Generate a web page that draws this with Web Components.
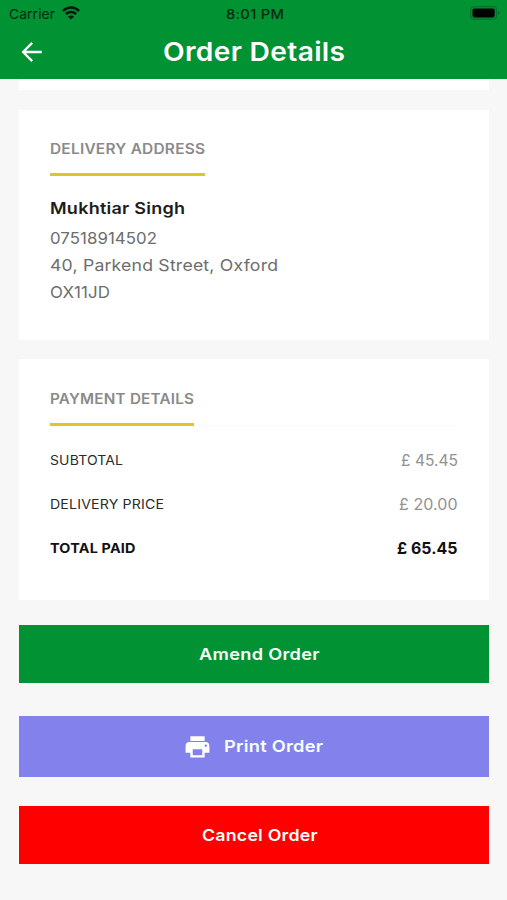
<!DOCTYPE html>
<html lang="en">
<head>
<meta charset="utf-8">
<title>Order Details</title>
<style>
body{margin:0;background:#f7f7f7;font-family:Inter,"Liberation Sans",sans-serif}
</style>
</head>
<body>
<order-page></order-page>
<script>
const define = (name, html, setup) => {
  const template = document.createElement('template');
  template.innerHTML = html;
  customElements.define(name, class extends HTMLElement {
    connectedCallback() {
      if (this.shadowRoot) return;
      this.attachShadow({mode: 'open'}).append(template.content.cloneNode(true));
      if (setup) setup(this, this.shadowRoot);
    }
  });
};

define('status-bar', `<style>
  :host{display:grid;grid-template-columns:1fr auto 1fr;align-items:center;height:27px;padding:0 7px 0 9px;box-sizing:border-box;font-size:13.5px;color:#06290f}
  .left{display:flex;align-items:center;gap:7px}
  .time{font-weight:500;font-size:13px}
  .battery{justify-self:end}
  svg{display:block;margin-top:-1px}
</style>
<div class="left"><wide-text w="46">Carrier</wide-text>
<svg width="18" height="14" viewBox="0 0 18 14" fill="none" stroke="#02180a" stroke-width="2.5"><path d="M.9 4.9C5.6.3 12.4.3 17.1 4.9M3.8 8c3-2.8 7.4-2.8 10.4 0"/><path d="M9 13.6 5.9 10.6c1.8-1.6 4.4-1.6 6.2 0z" fill="#02180a" stroke="none"/></svg></div>
<wide-text class="time" w="58">8:01 PM</wide-text>
<svg class="battery" width="30" height="14" viewBox="0 0 30 14"><rect x=".7" y=".7" width="25.8" height="12.4" rx="3.4" fill="none" stroke="#04702a" stroke-width="1.2"/><rect x="2.5" y="2.4" width="22.2" height="9" rx="1.8" fill="#000"/><path d="M28 4.8c2 .7 2 3.5 0 4.2z" fill="#04702a"/></svg>`);

define('app-header', `<style>
  :host{display:block;height:79px;background:#009233;color:#fff}
  .bar{display:grid;grid-template-columns:1fr auto 1fr;align-items:center;height:50px}
  svg{display:block;margin-left:21px}
  .title{font-size:26px;font-weight:600;line-height:50px}
</style><status-bar></status-bar>
<div class="bar"><svg width="22" height="22" viewBox="0 0 22 22" fill="none" stroke="#fff" stroke-width="2.3"><path d="M20.8 11H2M11.2 1.9 2.1 11l9.1 9.1"/></svg>
<div class="title"><slot></slot></div></div>`);

define('info-card', `<style>
  :host{display:block;box-sizing:border-box;background:#fff;padding:27px 31px 0 31px}
  .head{display:flex;border-bottom:1px solid var(--rule,transparent)}
  .label{display:block;height:36px;line-height:24px;font-size:14.2px;font-weight:600;color:#8a8a8a;border-bottom:3px solid #e6c229;margin-bottom:-1px}
</style><div class="head"><div class="label"><slot name="title"></slot></div></div><slot></slot>`);

define('price-row', `<style>
  :host{display:flex;justify-content:space-between;align-items:center;height:44px;font-size:13.2px;color:#2b2b2b}
  .price{padding-top:2px;font-size:15.6px;color:#929292}
  :host([total]){font-weight:700;color:#111}
  :host([total]) .price{color:#111}
</style><slot></slot><div class="price"><slot name="price"></slot></div>`);

define('action-button', `<style>
  :host{display:flex;align-items:center;justify-content:center;box-sizing:border-box;padding-left:11px;height:58px;color:#f6fff8;font-size:16.5px;font-weight:600;background:var(--button-color)}
  :host([tall]){height:61px;padding-left:1px}
  ::slotted(svg){margin-right:14px}
</style><slot></slot>`);

define('order-page', `<style>
  :host{display:block;height:900px;overflow:hidden;background:#f7f7f7}
  main{display:flex;flex-direction:column;padding:0 18.5px 0 19px}
  .previous{height:11px;background:#fff}
  .address{height:230px;margin-top:20px}
  .payment{height:241px;margin-top:19px;padding-top:28px;--rule:#fafafa}
  .name{margin-top:19.5px;line-height:24px;font-size:16.4px;font-weight:600;color:#1c1c1c}
  .lines{margin-top:5px;line-height:27.3px;font-size:16.3px;color:#6d6d6d}
  .rows{margin-top:11.5px}
  .amend{--button-color:#009233;margin-top:25px}
  .print{--button-color:#8382ed;margin-top:32.5px}
  .cancel{--button-color:#f00;margin-top:29.5px}
  .lines wide-text,.name wide-text{vertical-align:top}
</style>
<app-header><wide-text w="182">Order Details</wide-text></app-header>
<main>
<div class="previous"></div>
<info-card class="address"><wide-text slot="title" w="155">DELIVERY ADDRESS</wide-text>
<div class="name"><wide-text w="135">Mukhtiar Singh</wide-text></div>
<div class="lines"><div><wide-text w="107">07518914502</wide-text></div><div><wide-text w="228">40, Parkend Street, Oxford</wide-text></div><div><wide-text w="60">OX11JD</wide-text></div></div>
</info-card>
<info-card class="payment"><wide-text slot="title" w="144">PAYMENT DETAILS</wide-text>
<div class="rows">
<price-row><wide-text w="73">SUBTOTAL</wide-text><wide-text slot="price" w="57">£ 45.45</wide-text></price-row>
<price-row><wide-text w="114">DELIVERY PRICE</wide-text><wide-text slot="price" w="58.5">£ 20.00</wide-text></price-row>
<price-row total><wide-text w="85.5">TOTAL PAID</wide-text><wide-text slot="price" w="60.5">£ 65.45</wide-text></price-row>
</div></info-card>
<action-button class="amend"><wide-text w="120.5">Amend Order</wide-text></action-button>
<action-button class="print" tall><svg width="25" height="25" viewBox="1.5 1.2 21 21" fill="#fff"><path d="M19 8H5c-1.66 0-3 1.34-3 3v6h4v4h12v-4h4v-6c0-1.66-1.34-3-3-3zm-3 11H8v-5h8v5zm3-7c-.55 0-1-.45-1-1s.45-1 1-1 1 .45 1 1-.45 1-1 1zm-1-9H6v4h12V3z"/></svg><wide-text w="99">Print Order</wide-text></action-button>
<action-button class="cancel"><wide-text w="115.5">Cancel Order</wide-text></action-button>
</main>`);

// A single line of text spread to the width in its "w" attribute:
// part of the extra width is tracking, the rest widens the letters.
define('wide-text', `<style>
  :host{display:inline-block;white-space:pre}
  span{display:inline-block;transform-origin:0 50%}
</style><span><slot></slot></span>`, (el, root) => {
  const span = root.querySelector('span');
  const width = +el.getAttribute('w');
  const natural = span.getBoundingClientRect().width;
  const gaps = el.textContent.length - 1;
  const spacing = (width - natural) * .2 / gaps;
  span.style.letterSpacing = spacing + 'px';
  span.style.transform = `scaleX(${width / (natural + spacing * gaps)})`;
  el.style.width = width + 'px';
});
</script>
</body>
</html>
